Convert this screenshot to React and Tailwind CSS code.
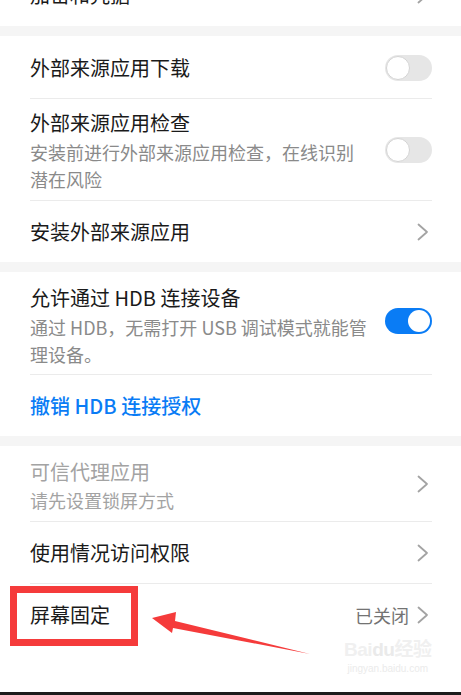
import React from "react";

const FONT = { fontFamily: '"Noto Sans CJK SC", "Noto Sans", sans-serif' };

function Chevron({ className = "" }) {
  return (
    <svg width="12" height="18" viewBox="0 0 12 18" className={className}>
      <polyline points="1.5,1.5 10,9 1.5,16.5" fill="none" stroke="#a3a3a3" strokeWidth="1.8" strokeLinecap="round" strokeLinejoin="round" />
    </svg>
  );
}

function Toggle({ on }) {
  if (on) {
    return (
      <div className="w-[47px] h-[26px] rounded-full bg-[#0a7cf5] flex items-center justify-end pr-[2px] shrink-0">
        <div className="w-[22px] h-[22px] rounded-full bg-white" />
      </div>
    );
  }
  return (
    <div className="w-[47px] h-[26px] rounded-full bg-[#e6e6e6] flex items-center pl-[1px] shrink-0">
      <div className="w-[24px] h-[24px] rounded-full bg-white border border-[#d4d4d4]" />
    </div>
  );
}

function Band() {
  return <div className="h-[10px] bg-[#f5f5f5]" />;
}

export default function App() {
  return (
    <div className="relative w-[461px] h-[695px] bg-white overflow-hidden" style={FONT}>
      {/* top partially visible row */}
      <div className="h-[26px] overflow-hidden pl-[30px] pr-[29px]">
        <div className="mt-[-36px] h-[62px] flex items-center justify-between">
          <span className="text-[20px] text-[#1a1a1a]">加密和凭据</span>
          <Chevron className="mr-[3px]" />
        </div>
      </div>
      <Band />

      {/* section 1 */}
      <div className="pl-[30px] pr-[29px]">
        <div className="h-[63px] border-b border-[#ebebeb] flex items-center justify-between pt-[2px]">
          <span className="text-[20px] leading-[26px] text-[#1a1a1a]">外部来源应用下载</span>
          <Toggle on={false} />
        </div>
        <div className="h-[102px] border-b border-[#ebebeb] flex items-center justify-between">
          <div className="self-start pt-[11px] flex flex-col gap-[3px]">
            <span className="text-[20px] leading-[26px] text-[#1a1a1a]">外部来源应用检查</span>
            <span className="text-[18px] leading-[26.5px] text-[#8a8a8a] w-[330px]">安装前进行外部来源应用检查，在线识别潜在风险</span>
          </div>
          <Toggle on={false} />
        </div>
        <div className="h-[61px] flex items-center justify-between">
          <span className="text-[20px] leading-[26px] text-[#1a1a1a]">安装外部来源应用</span>
          <Chevron className="mr-[3px]" />
        </div>
      </div>
      <Band />

      {/* section 2 */}
      <div className="pl-[30px] pr-[29px]">
        <div className="h-[103px] border-b border-[#ebebeb] flex items-center justify-between">
          <div className="self-start pt-[13px] flex flex-col gap-[3px]">
            <span className="text-[20px] leading-[26px] text-[#1a1a1a]">允许通过 HDB 连接设备</span>
            <span className="text-[18px] leading-[26.5px] text-[#8a8a8a] w-[345px]">通过 HDB，无需打开 USB 调试模式就能管理设备。</span>
          </div>
          <div className="mt-[-4px]">
            <Toggle on={true} />
          </div>
        </div>
        <div className="h-[61px] flex items-center">
          <span className="text-[20px] leading-[26px] text-[#0a7cf5] font-medium">撤销 HDB 连接授权</span>
        </div>
      </div>
      <Band />

      {/* section 3 */}
      <div className="pl-[30px] pr-[29px]">
        <div className="h-[76px] border-b border-[#ebebeb] flex items-center justify-between">
          <div className="self-start pt-[13px] flex flex-col gap-[2px]">
            <span className="text-[20px] leading-[26px] text-[#a3a3a3]">可信代理应用</span>
            <span className="text-[18px] leading-[26px] text-[#a3a3a3]">请先设置锁屏方式</span>
          </div>
          <Chevron className="mr-[3px]" />
        </div>
        <div className="h-[62px] border-b border-[#ebebeb] flex items-center justify-between">
          <span className="text-[20px] leading-[26px] text-[#1a1a1a]">使用情况访问权限</span>
          <Chevron className="mr-[3px]" />
        </div>
        <div className="h-[62px] flex items-center justify-between">
          <span className="text-[20px] leading-[26px] text-[#1a1a1a]">屏幕固定</span>
          <div className="flex items-center gap-[8px]">
            <span className="text-[18px] leading-[26px] text-[#737373]">已关闭</span>
            <Chevron className="mr-[3px]" />
          </div>
        </div>
      </div>

      <div className="h-[46px]" />
      <div className="h-[3px] bg-[#1c1c1c]" />

      {/* annotation: red box */}
      <div className="absolute left-[10px] top-[586px] w-[128px] h-[60px] border-[7px] border-[#f53b3b]" />

      {/* annotation: red arrow */}
      <svg className="absolute left-0 top-0" width="461" height="695" viewBox="0 0 461 695">
        <polygon points="152,618 176,612 175,621 310,654 173,628 172,633" fill="#f53b3b" />
      </svg>

      {/* baidu watermark */}
      <div className="absolute left-[344px] top-[640px] flex flex-col items-center leading-none">
        <span className="text-[19px] font-bold text-[#f0f0f0] tracking-tight" style={{ fontFamily: '"Liberation Sans", "Noto Sans CJK SC", sans-serif' }}>Bai<span className="text-[#eaeaea]">du</span>经验</span>
        <span className="mt-[5px] text-[10px] text-[#ebebeb]" style={{ fontFamily: '"Liberation Sans", sans-serif' }}>jingyan.baidu.com</span>
      </div>
    </div>
  );
}
